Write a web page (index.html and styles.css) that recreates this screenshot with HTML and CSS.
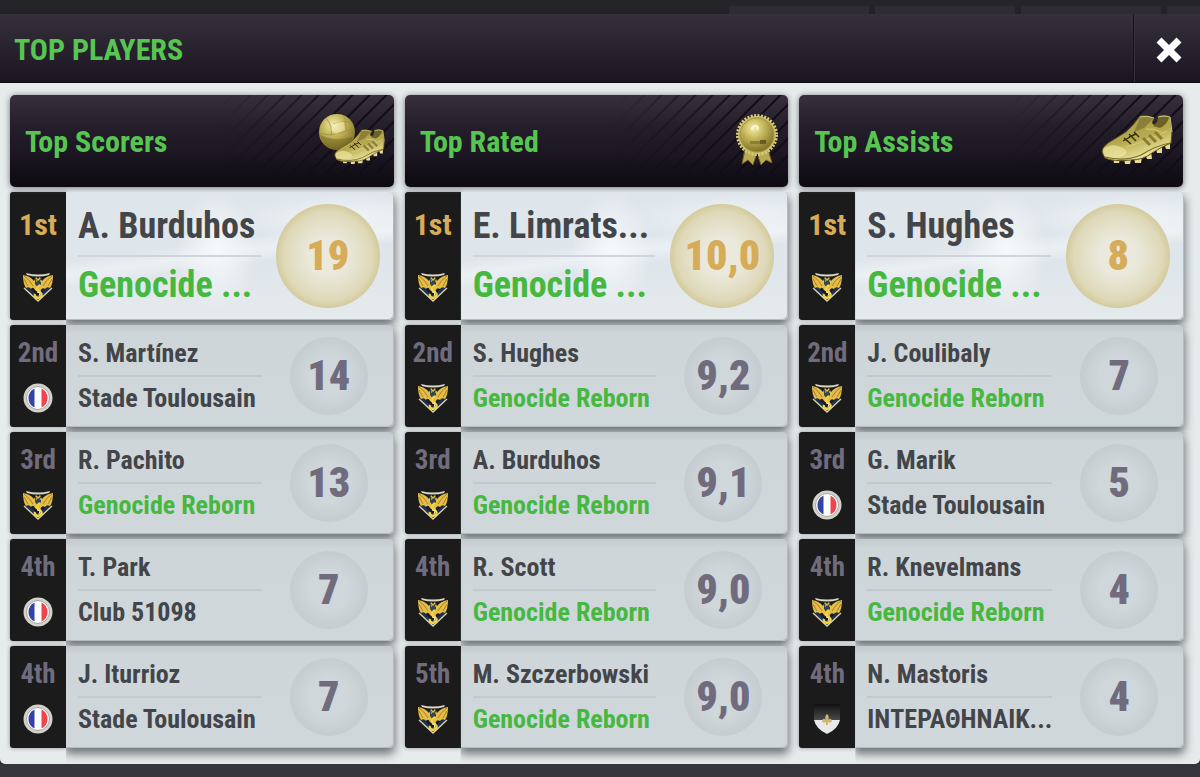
FILE: index.html
```html
<!DOCTYPE html>
<html lang="en">
<head>
<meta charset="utf-8">
<meta name="viewport" content="width=device-width, initial-scale=1">
<title>Top Players</title>
<link rel="stylesheet" href="styles.css">
</head>
<body>
<svg class="defs" aria-hidden="true">
  <defs>
    <radialGradient id="gold" cx=".4" cy=".3" r=".75"><stop offset="0" stop-color="#f3edb0"/><stop offset=".4" stop-color="#c6b95c"/><stop offset="1" stop-color="#77691f"/></radialGradient>
    <linearGradient id="leather" x1="0" y1="0" x2=".5" y2="1"><stop offset="0" stop-color="#a89b45"/><stop offset=".6" stop-color="#b6a94f"/><stop offset="1" stop-color="#efe7a0"/></linearGradient>
    <linearGradient id="shade" x1="0" y1="0" x2="0" y2="1"><stop offset="0" stop-color="#111"/><stop offset="1" stop-color="#4a4a4a"/></linearGradient>
  </defs>
  <symbol id="boot" viewBox="0 0 72 52">
    <path d="M12 44l1 5h5l1-4M23 45l1 5h5l1-4M33 44l1 5h6l1-6M44 40l2 5h5l-1-8M55 34l1 5h5l0-8M63 29l2 6h4l0-9" fill="#e4dc98"/>
    <path d="M1 38Q1 33 7 29L25 18Q33 11 39 2Q46 1 53 4L51 9Q53 12 56 10L58 2Q64 0 69 3L71 18L70 29Q60 33 51 39Q42 46 30 46Q12 48 4 44Z" fill="url(#leather)" stroke="#5e531a" stroke-width="1"/>
    <path d="M39 3Q46 1 53 4L43 14L33 18Q37 9 39 3Z" fill="#8c7f38"/>
    <path d="M57 3Q63 1 68 3Q67 10 59 14L52 12Q57 9 57 3Z" fill="#6c6126"/>
    <path d="M39 3Q46 1 53 4M57 3Q63 1 69 3L71 18" fill="none" stroke="#d0c57c" stroke-width="1"/>
    <path d="M2 35Q11 28 22 34Q30 39 20 43Q9 46 3 42Z" fill="#eee6a3" opacity=".7"/>
    <path d="M25 33Q41 29 66 17M33 39Q48 31 68 25M45 15Q53 14 60 18" fill="none" stroke="#d9cd7c" stroke-width="1"/>
    <path d="M42 24l7 7M48 21l7 7M54 18l7 7" stroke="#8a7d33" stroke-width="3"/>
    <path d="M23 24l7 6M22 27l7-4M28 20l7 7M28 23l7-3M33 18l5 5" fill="none" stroke="#342d0c" stroke-width="1.4"/>
    <path d="M4 43Q24 48 40 41Q54 32 69 29" fill="none" stroke="#766a2c" stroke-width="1.2"/>
  </symbol>
  <symbol id="ball-boot" viewBox="0 0 68 54">
    <circle cx="19" cy="19" r="18" fill="url(#gold)"/>
    <path d="M1 20Q14 25 36 15M8 5Q15 13 13 23M15 11Q23 7 33 9M25 2Q29 8 28 18" fill="none" stroke="#9c8e3e" stroke-width=".7"/>
    <path d="M2 22Q16 29 35 24Q31 37 19 37Q6 36 2 22Z" fill="#65591d" opacity=".4"/>
    <path d="M15 11Q19 7 26 9L27 17L18 21L13 17Z" fill="#fffbd0" opacity=".4"/>
    <svg x="16" y="15" width="51" height="38" viewBox="0 0 72 52"><use href="#boot"/></svg>
  </symbol>
  <symbol id="medal" viewBox="0 0 44 52">
    <path d="M10 35L7 50L13 46L18 51L22 39L26 51L31 46L37 49L33 35Z" fill="#b7aa51" stroke="#6e6224"/>
    <path d="M22 40v10" stroke="#241d1d" stroke-width="2"/>
    <circle cx="22" cy="21" r="19" fill="#c4b75d"/>
    <circle cx="22" cy="21" r="19.500" fill="none" stroke="#d7cc7b" stroke-width="3" stroke-dasharray="2 1.400"/>
    <circle cx="22" cy="21" r="17" fill="url(#gold)" stroke="#a39644"/>
    <path d="M17 16Q17 12 21 12Q24 13 22 16" fill="none" stroke="#fff9c8" stroke-width="2"/>
    <path d="M15 27h15v3H15z" fill="#8b7e38"/><path d="M25 26h6v4h-6z" fill="#685c22"/>
  </symbol>
  <symbol id="dragon" viewBox="0 0 32 32">
    <path d="M4 2Q16 5 28 2L27 4Q16 7 5 4Z" fill="#d9d7c5"/>
    <path d="M2 17L16 30L30 17L27 15L16 25L5 15Z" fill="#1c3157"/>
    <path d="M2 17L16 30L30 17" fill="none" stroke="#e0d6a0" stroke-width="1.3"/>
    <path d="M1 4Q8 5 12 10L14 6L16 8L18 6L20 10Q24 5 31 4Q31 13 28 17Q25 15 23 18Q20 16 19 19L17 22L13 19Q11 15 9 18Q7 15 4 17Q1 13 1 4Z" fill="#e6bd45"/>
    <path d="M2 5Q8 9 11 15M2 8L6 15M30 5Q24 9 21 15M30 8L26 15" fill="none" stroke="#94702a" stroke-width=".8"/>
    <path d="M13 7L16 10L19 7L19 13L16 17L13 13Z" fill="#31474b"/>
    <path d="M14 10h1M18 10h1" stroke="#ffe784"/>
    <path d="M18 14Q12 18 18 21Q22 25 16 27Q12 26 13 23" fill="none" stroke="#f2d34c" stroke-width="2.4"/>
    <path d="M15 21l3 1-1 3" fill="none" stroke="#fff2a1"/>
  </symbol>
  <symbol id="france" viewBox="0 0 32 32">
    <circle cx="16" cy="16" r="14.500" fill="#d4d2cb"/><circle cx="16" cy="16" r="11.500" fill="#fff" stroke="#a3a3a3"/>
    <path d="M12.500 6.500A10.500 10.500 0 0 0 12.500 25.500Z" fill="#3444a2"/><path d="M19.500 6.500A10.500 10.500 0 0 1 19.500 25.500Z" fill="#ee4650"/>
  </symbol>
  <symbol id="shield" viewBox="0 0 32 32">
    <path d="M3 1H29V17Q27 26 16 31Q5 26 3 17Z" fill="#e9e9e9"/>
    <path d="M3 1H29V17H3Z" fill="url(#shade)"/>
    <path d="M16 11Q19 14 17 17Q20 14 21 18Q20 21 17 19V22H15V19Q12 21 11 18Q12 14 15 17Q13 14 16 11Z" fill="#cdb871"/>
  </symbol>
</svg>

<div class="tabs"><span></span><span></span><span></span><span></span></div>
<main class="panel">
  <header class="panel-head">
    <h1>TOP PLAYERS</h1>
    <button class="close" type="button" aria-label="Close">
      <svg viewBox="0 0 26 26"><path d="M3 3L23 23M23 3L3 23" stroke="#fff" stroke-width="7"/></svg>
    </button>
  </header>
  <div class="columns">
    <section class="column">
      <header class="column-head"><h2>Top Scorers</h2><svg class="trophy wide"><use href="#ball-boot"/></svg></header>
      <ol class="ranking">
        <li class="card first"><div class="rank"><span>1st</span><svg><use href="#dragon"/></svg></div><div class="info"><div class="who"><p>A. Burduhos</p><p class="own">Genocide ...</p></div><div class="score"><b>19</b></div></div></li>
        <li class="card"><div class="rank"><span>2nd</span><svg><use href="#france"/></svg></div><div class="info"><div class="who"><p>S. Martínez</p><p>Stade Toulousain</p></div><div class="score"><b>14</b></div></div></li>
        <li class="card"><div class="rank"><span>3rd</span><svg><use href="#dragon"/></svg></div><div class="info"><div class="who"><p>R. Pachito</p><p class="own">Genocide Reborn</p></div><div class="score"><b>13</b></div></div></li>
        <li class="card"><div class="rank"><span>4th</span><svg><use href="#france"/></svg></div><div class="info"><div class="who"><p>T. Park</p><p>Club 51098</p></div><div class="score"><b>7</b></div></div></li>
        <li class="card"><div class="rank"><span>4th</span><svg><use href="#france"/></svg></div><div class="info"><div class="who"><p>J. Iturrioz</p><p>Stade Toulousain</p></div><div class="score"><b>7</b></div></div></li>
      </ol>
    </section>
    <section class="column">
      <header class="column-head"><h2>Top Rated</h2><svg class="trophy round"><use href="#medal"/></svg></header>
      <ol class="ranking">
        <li class="card first"><div class="rank"><span>1st</span><svg><use href="#dragon"/></svg></div><div class="info"><div class="who"><p>E. Limrats...</p><p class="own">Genocide ...</p></div><div class="score"><b>10,0</b></div></div></li>
        <li class="card"><div class="rank"><span>2nd</span><svg><use href="#dragon"/></svg></div><div class="info"><div class="who"><p>S. Hughes</p><p class="own">Genocide Reborn</p></div><div class="score"><b>9,2</b></div></div></li>
        <li class="card"><div class="rank"><span>3rd</span><svg><use href="#dragon"/></svg></div><div class="info"><div class="who"><p>A. Burduhos</p><p class="own">Genocide Reborn</p></div><div class="score"><b>9,1</b></div></div></li>
        <li class="card"><div class="rank"><span>4th</span><svg><use href="#dragon"/></svg></div><div class="info"><div class="who"><p>R. Scott</p><p class="own">Genocide Reborn</p></div><div class="score"><b>9,0</b></div></div></li>
        <li class="card"><div class="rank"><span>5th</span><svg><use href="#dragon"/></svg></div><div class="info"><div class="who"><p>M. Szczerbowski</p><p class="own">Genocide Reborn</p></div><div class="score"><b>9,0</b></div></div></li>
      </ol>
    </section>
    <section class="column">
      <header class="column-head"><h2>Top Assists</h2><svg class="trophy shoe"><use href="#boot"/></svg></header>
      <ol class="ranking">
        <li class="card first"><div class="rank"><span>1st</span><svg><use href="#dragon"/></svg></div><div class="info"><div class="who"><p>S. Hughes</p><p class="own">Genocide ...</p></div><div class="score"><b>8</b></div></div></li>
        <li class="card"><div class="rank"><span>2nd</span><svg><use href="#dragon"/></svg></div><div class="info"><div class="who"><p>J. Coulibaly</p><p class="own">Genocide Reborn</p></div><div class="score"><b>7</b></div></div></li>
        <li class="card"><div class="rank"><span>3rd</span><svg><use href="#france"/></svg></div><div class="info"><div class="who"><p>G. Marik</p><p>Stade Toulousain</p></div><div class="score"><b>5</b></div></div></li>
        <li class="card"><div class="rank"><span>4th</span><svg><use href="#dragon"/></svg></div><div class="info"><div class="who"><p>R. Knevelmans</p><p class="own">Genocide Reborn</p></div><div class="score"><b>4</b></div></div></li>
        <li class="card"><div class="rank"><span>4th</span><svg><use href="#shield"/></svg></div><div class="info"><div class="who"><p>N. Mastoris</p><p>ΙΝΤΕΡΑΘΗΝΑΙΚ...</p></div><div class="score"><b>4</b></div></div></li>
      </ol>
    </section>
  </div>
</main>
</body>
</html>
```

FILE: styles.css
```css
* { box-sizing: border-box; }

body {
  margin: 0;
  background: #36343c;
  color: #434549;
  font-family: "Liberation Sans Narrow", "Arial Narrow", "Roboto Condensed", "Liberation Sans", sans-serif;
  font-weight: bold;
}

h1, h2, p, ol { margin: 0; padding: 0; font-weight: bold; }
ol { list-style: none; }
.defs { position: absolute; width: 0; height: 0; }

.tabs {
  display: flex;
  justify-content: flex-end;
  gap: 6px;
  height: 14px;
  padding-top: 6px;
  background: #252428;
  overflow: hidden;
}
.tabs span { width: 140px; background: #2e2c32; }
.tabs span:last-child { width: 33px; }

.panel {
  background: #e6ebec;
  border-radius: 0 0 5px 5px;
  box-shadow: 0 3px 8px #1b1a20;
  overflow: hidden;
}
.panel-head {
  display: flex;
  justify-content: space-between;
  align-items: stretch;
  min-height: 69px;
  background: linear-gradient(#362f3c, #1b1521);
  border-bottom: 1px solid #0e0b12;
}
h1, h2 { color: #56c651; font-size: 30px; line-height: 36px; }
h1 { align-self: center; padding: 4px 0 0 14px; }

.close {
  display: grid;
  place-items: center;
  width: 67px;
  padding: 4px 0 0 4px;
  border: 0;
  border-left: 1px solid #17131c;
  background: none;
  box-shadow: inset 1px 0 #352e3c;
}
.close svg { width: 26px; height: 26px; }

.columns {
  display: grid;
  grid-template-columns: repeat(3, minmax(0, 1fr));
  gap: 11px;
  padding: 12px 17px 16px 10px;
}
.column-head {
  position: relative;
  display: flex;
  align-items: center;
  justify-content: space-between;
  height: 92px;
  padding: 2px 6px 0 15px;
  margin-bottom: 5px;
  border-radius: 5px;
  background: linear-gradient(#382f3d, #241e2a 35%, #1b1622 65%, #0d0a10);
  box-shadow: 0 1px 6px #6d7276;
}
.column-head::before {
  content: "";
  position: absolute;
  inset: 0 0 14px 50%;
  border-radius: 5px;
  background: repeating-linear-gradient(135deg, transparent 0 9px, #110c16 10px 11px, transparent 12px);
  mask-image: linear-gradient(90deg, transparent 10%, #000 80%);
}
.trophy { position: relative; }
.wide { width: 68px; height: 54px; margin: 0 2px 4px 0; }
.round { width: 44px; height: 52px; margin: 0 3px 4px 0; }
.shoe { width: 72px; height: 52px; margin: 0 4px 4px 0; }

.ranking { display: grid; gap: 5px; }
.card { display: flex; height: 102px; }
.rank {
  display: flex;
  flex: none;
  flex-direction: column;
  align-items: center;
  justify-content: space-between;
  width: 56px;
  padding: 11px 0 13px;
  border-radius: 3px 0 0 3px;
  background: #1b1b1b;
  box-shadow: 0 0 4px #8d9396;
  color: #706c7e;
  font-size: 27px;
  line-height: 34px;
}
.rank svg { width: 32px; height: 32px; }

.info {
  display: flex;
  flex: 1;
  min-width: 0;
  align-items: center;
  border-radius: 0 5px 5px 0;
  background: linear-gradient(#c2cacd, #ced6da 9px, #cfd7db);
  box-shadow: inset -1px -1px #b4bcbf, 0 5px 10px 1px #6f7477;
  clip-path: inset(0 -12px -16px 0);
}
.who {
  flex: 1;
  min-width: 0;
  padding: 0 0 2px 12px;
  font-size: 26px;
  line-height: 44px;
  white-space: nowrap;
}
.who p + p { border-top: 2px solid #c0cad0; line-height: 42px; }
.who .own { color: #46b83f; }

.score {
  display: grid;
  place-items: center;
  flex: none;
  width: 78px;
  height: 78px;
  margin: 0 26px 0 28px;
  border-radius: 50%;
  background: radial-gradient(#cfd7da 35%, #bcc4c8);
  color: #706c7e;
  font-size: 42px;
  line-height: 48px;
}

.first { height: 128px; }
.first .rank { padding: 16px 0 17px; color: #d6ac59; font-size: 30px; }
.first .info {
  background:
    radial-gradient(ellipse 40px 60px at 46% 45%, #f6f9fb, transparent),
    radial-gradient(ellipse 120px 26px at 86% 20%, #eff4f6, transparent),
    linear-gradient(172deg, transparent 40%, #ebf0f3 48%, transparent 56%),
    linear-gradient(#dee5eb, #dfe6eb 60%, #e5eaec);
}
.first .who { font-size: 36px; line-height: 58px; }
.first .who p + p { border-color: #ced5db; line-height: 56px; }
.first .score {
  width: 104px;
  height: 104px;
  margin: 0 14px 0 15px;
  background: radial-gradient(#eae9dc 25%, #dfd9b9 60%, #cfc490 75%);
  color: #d6ac59;
}
```
